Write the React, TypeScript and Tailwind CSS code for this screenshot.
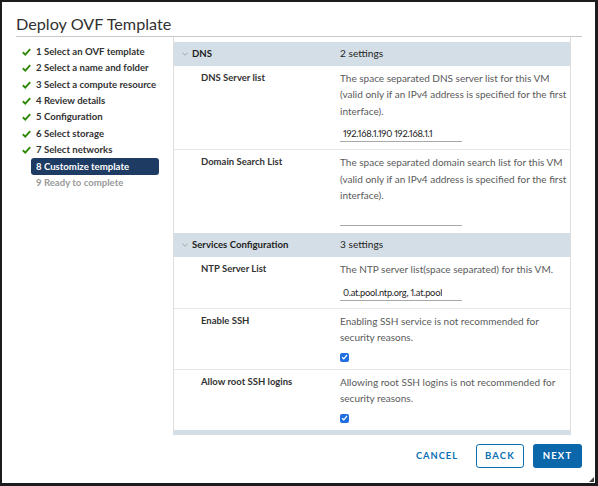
import React from "react";

const steps = [
  "1 Select an OVF template",
  "2 Select a name and folder",
  "3 Select a compute resource",
  "4 Review details",
  "5 Configuration",
  "6 Select storage",
  "7 Select networks",
];

function Check() {
  return (
    <svg width="9" height="8" viewBox="0 0 9 8" className="shrink-0">
      <path d="M0.8 4.2 L3.3 6.6 L8.2 1.2" fill="none" stroke="#2f8a0a" strokeWidth="1.9" />
    </svg>
  );
}

function Chevron() {
  return (
    <svg width="6" height="4" viewBox="0 0 6 4" className="shrink-0">
      <path d="M0.5 0.7 L3 3.2 L5.5 0.7" fill="none" stroke="#9a9a9a" strokeWidth="0.8" />
    </svg>
  );
}

function CheckBox() {
  return (
    <div className="mt-[7px] w-[9px] h-[9px] rounded-[2px] bg-[#1f6fe0] flex items-center justify-center">
      <svg width="7" height="6" viewBox="0 0 7 6">
        <path d="M1 3.2 L2.8 4.8 L6 1" fill="none" stroke="white" strokeWidth="1.2" />
      </svg>
    </div>
  );
}

function Header({ title, count }: { title: string; count: string }) {
  return (
    <div className="h-[23.5px] shrink-0 bg-[#d4dee6] flex items-center text-[#1f1f1f]">
      <div className="pl-[8px] w-[166px] flex items-center">
        <Chevron />
        <span className="ml-[4px] font-bold text-[9.6px]">{title}</span>
      </div>
      <span className="text-[10.2px]">{count}</span>
    </div>
  );
}

function Row({
  label,
  lines,
  children,
  last,
}: {
  label: string;
  lines: string[];
  children?: React.ReactNode;
  last?: boolean;
}) {
  return (
    <div className={`shrink-0 flex pt-[4.5px] pb-[7px] ${last ? "" : "border-b border-[#e8e8e8]"}`}>
      <div className="pl-[27px] w-[166px] shrink-0 text-[9.5px] leading-[16.3px] font-bold text-[#333]">
        {label}
      </div>
      <div className="flex flex-col">
        <div className="text-[10px] leading-[16.3px] text-[#5a5a5a] whitespace-nowrap">
          {lines.map((l, i) => (
            <div key={i}>{l}</div>
          ))}
        </div>
        {children}
      </div>
    </div>
  );
}

function Input({ value }: { value: string }) {
  return (
    <div className="mt-[6px] w-[122px] pt-[2px] pl-[3px] h-[17px] leading-[14px] border-b border-[#a9a9a9] text-[9.3px] text-[#222] whitespace-nowrap">
      <div className="w-[99px] overflow-hidden proportional-nums tracking-[-0.25px]">{value}</div>
    </div>
  );
}

export default function App() {
  return (
    <div
      className="w-[598px] h-[486px] bg-white border-t-2 border-l-2 border-r-[3px] border-b-[3px] border-[#1c1c1c] flex flex-col overflow-hidden"
      style={{ fontFamily: "Lato, 'Liberation Sans', sans-serif" }}
    >
      <div className="shrink-0 ml-[14px] mr-[13px] pt-[10px] h-[35px] border-b border-[#c8c8c8]">
        <div className="text-[16.2px] leading-[24px] text-[#313131]">Deploy OVF Template</div>
      </div>
      <div className="flex h-[398px] shrink-0">
        <div className="ml-[14px] w-[157px] pl-[6px] pt-[7px] flex flex-col">
          {steps.map((s) => (
            <div key={s} className="h-[16.33px] shrink-0 flex items-center text-[9.6px] font-bold text-[#333]">
              <Check />
              <span className="ml-[5px] whitespace-nowrap">{s}</span>
            </div>
          ))}
          <div className="h-[17px] shrink-0 ml-[9px] w-[128px] rounded-[3px] bg-[#1d3b63] flex items-center pl-[5px] text-[9.6px] font-bold text-white">
            8 Customize template
          </div>
          <div className="h-[16px] shrink-0 flex items-center pl-[14px] text-[9.6px] font-bold text-[#9a9a9a]">
            9 Ready to complete
          </div>
        </div>
        <div className="w-[398px] border-l border-r border-[#dedede] pt-[5px] overflow-hidden flex flex-col">
          <Header title="DNS" count="2 settings" />
          <Row
            label="DNS Server list"
            lines={[
              "The space separated DNS server list for this VM",
              "(valid only if an IPv4 address is specified for the first",
              "interface).",
            ]}
          >
            <Input value="192.168.1.190 192.168.1.1" />
          </Row>
          <Row
            label="Domain Search List"
            lines={[
              "The space separated domain search list for this VM",
              "(valid only if an IPv4 address is specified for the first",
              "interface).",
            ]}
            last
          >
            <Input value="" />
          </Row>
          <Header title="Services Configuration" count="3 settings" />
          <Row label="NTP Server List" lines={["The NTP server list(space separated) for this VM."]}>
            <Input value="0.at.pool.ntp.org, 1.at.pool.ntp.org" />
          </Row>
          <Row
            label="Enable SSH"
            lines={["Enabling SSH service is not recommended for", "security reasons."]}
          >
            <CheckBox />
          </Row>
          <Row
            label="Allow root SSH logins"
            lines={["Allowing root SSH logins is not recommended for", "security reasons."]}
            last
          >
            <CheckBox />
          </Row>
          <div className="h-[24px] shrink-0 bg-[#d4dee6]" />
        </div>
      </div>
      <div className="relative flex-1 flex justify-end items-start pt-[9px] pr-[13px]">
        <button className="h-[24px] px-[12px] text-[9.3px] font-bold tracking-[1px] text-[#0b6fb3]">
          CANCEL
        </button>
        <button className="ml-[6px] h-[24px] w-[48px] rounded-[3px] border border-[#0b6fb3] text-[9.5px] font-bold tracking-[1.2px] text-[#0b6fb3] bg-white">
          BACK
        </button>
        <button className="ml-[9px] h-[24px] w-[49px] rounded-[3px] bg-[#0b67aa] text-[9.5px] font-bold tracking-[1.2px] text-white">
          NEXT
        </button>
        <svg width="5" height="5" viewBox="0 0 5 5" className="absolute right-[1px] bottom-[1px]">
          <path d="M5 0 L5 5 L0 5 Z" fill="#444" />
        </svg>
      </div>
    </div>
  );
}
